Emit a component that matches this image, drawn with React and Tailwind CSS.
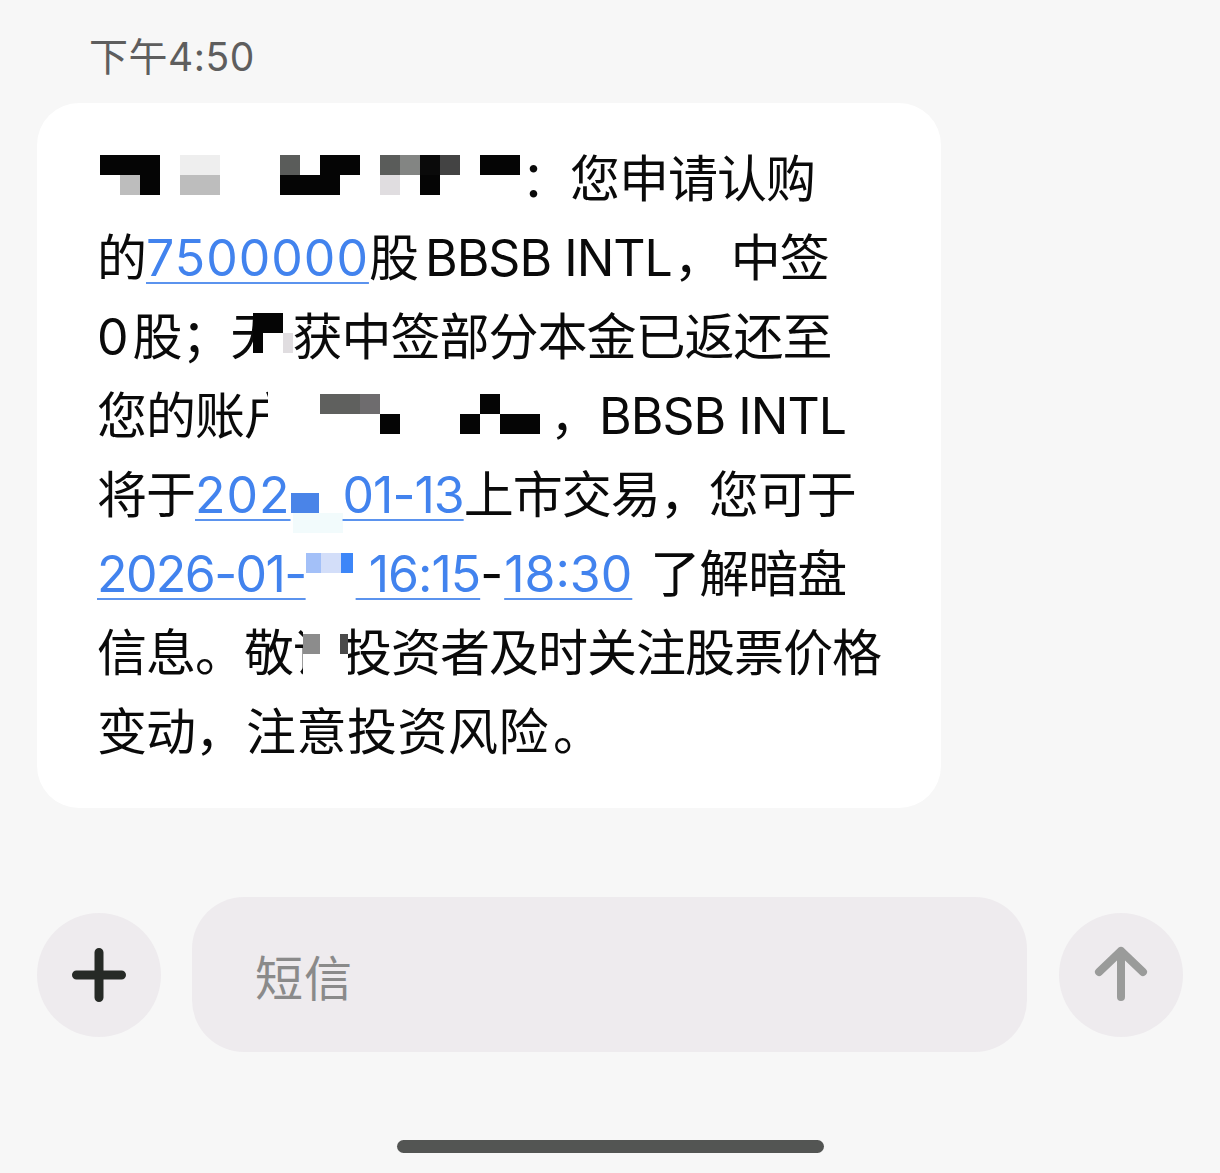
import React from 'react';

const K = '#050505';

// pixelated redaction block, rows of [width, colour] cells, 20px tall each
function Mosaic({ rows, className = '' }) {
  return (
    <span className={`flex flex-col shrink-0 ${className}`}>
      {rows.map((row, i) => (
        <span key={i} className="flex h-[20px]">
          {row.map(([w, c], j) => (
            <span key={j} style={{ width: w, background: c || 'transparent' }} />
          ))}
        </span>
      ))}
    </span>
  );
}

function Link({ children, className = '' }) {
  return (
    <span className={`text-[#4283ee] underline decoration-[2px] underline-offset-[6px] decoration-[#5b93ee] ${className}`}>
      {children}
    </span>
  );
}

function Line({ children }) {
  return <div className="flex h-[79px] leading-[79px] whitespace-pre">{children}</div>;
}

export default function App() {
  return (
    <div className="w-[1220px] h-[1173px] bg-[#f7f7f7] flex flex-col font-[Inter,'Noto_Sans_CJK_SC',sans-serif] overflow-hidden">
      {/* timestamp */}
      <div className="h-[103px] pl-[89px] pt-[35px] text-[39px] leading-[44px] tracking-[0.5px] text-[#5e5e5e]">
        下午4:50
      </div>

      {/* message bubble */}
      <div className="ml-[37px] w-[904px] bg-white rounded-[42px] pl-[60px] pt-[37px] pb-[36px] text-[50px] tracking-[-1px] text-[#0a0a0a]">
        <Line>
          <Mosaic
            className="ml-[3px] mt-[15px]"
            rows={[
              [[60, K], [20], [40, '#eeeeee'], [60], [20, '#5a5c5a'], [20], [40, K], [20], [20, '#5a5c5a'], [20, '#838583'], [20, '#0a0a0a'], [20, '#434343'], [20], [40, K]],
              [[20], [20, '#bdbdbd'], [20, K], [20], [40, '#bdbdbd'], [60], [60, K], [40], [20, '#e0dde0'], [20], [20, K], [80]],
            ]}
          />
          <span className="pl-[1px]">{'：您申请认购'}</span>
        </Line>
        <Line>
          <span>{'的'}</span>
          <Link className="tracking-[1px]">{'7500000'}</Link>
          <span>{'股'}</span>
          <span className="pl-[7px]">{'BBSB INTL'}</span>
          <span className="pl-[2px]">{'，'}</span>
          <span className="pl-[8px]">{'中签'}</span>
        </Line>
        <Line>
          <span className="pr-[5px]">{'0'}</span>
          <span>{'股；'}</span>
          <span className="inline-block w-[22px] overflow-hidden">{'无'}</span>
          <Mosaic
            className="mt-[15px]"
            rows={[
              [[30, K], [10]],
              [[10, K], [20], [10, '#e0dde0']],
            ]}
          />
          <span>{'获中签部分本金已返还至'}</span>
        </Line>
        <Line>
          <span>{'您的账'}</span>
          <span className="inline-block w-[24px] overflow-hidden">{'户'}</span>
          <Mosaic
            className="mt-[17px]"
            rows={[
              [[52], [40, '#5f605e'], [20, '#6e6c6e'], [100], [20, K], [50]],
              [[112], [20, K], [60], [20, K], [20], [40, K], [10]],
            ]}
          />
          <span>{'，BBSB INTL'}</span>
        </Line>
        <Line>
          <span>{'将于'}</span>
          <Link className="tracking-[1px]">{'202'}</Link>
          <Mosaic
            className="mt-[37px]"
            rows={[
              [[28, '#4a84e8'], [24]],
              [[2], [50, '#f2fbfc']],
            ]}
          />
          <Link>{'01-13'}</Link>
          <span>{'上市交易，您可于'}</span>
        </Line>
        <Line>
          <Link className="tracking-[-1.6px]">{'2026-01-'}</Link>
          <Mosaic
            className="mt-[18px]"
            rows={[[[15, '#a3c0f8'], [20, '#d3def9'], [12, '#3d86f8'], [3]]]}
          />
          <Link>{' 16:15'}</Link>
          <span className="pr-[2px]">{'-'}</span>
          <Link className="tracking-[0px]">{'18:30'}</Link>
          <span className="pl-[5px]">{' 了解暗盘'}</span>
        </Line>
        <Line>
          <span>{'信息。敬'}</span>
          <span className="inline-block w-[10px] overflow-hidden">{'请'}</span>
          <Mosaic
            className="mt-[20px]"
            rows={[[[17, '#8c8c8c'], [20], [8, '#4a4a4a']]]}
          />
          <span className="inline-block w-[43px] overflow-hidden">
            <span className="inline-block -ml-[6px]">{'投'}</span>
          </span>
          <span>{'资者及时关注股票价格'}</span>
        </Line>
        <Line>
          <span>{'变动，'}</span>
          <span className="pl-[2px] tracking-[0.5px]">{'注意投资风险'}</span>
          <span className="pl-[4px]">{'。'}</span>
        </Line>
      </div>

      {/* composer */}
      <div className="mt-[89px] ml-[37px] flex items-center">
        <button className="w-[124px] h-[124px] rounded-full bg-[#eeebee] flex items-center justify-center shrink-0">
          <svg width="60" height="60" viewBox="0 0 60 60" fill="none" stroke="#262a26" strokeWidth="9" strokeLinecap="round">
            <path d="M7.5 30H52.5M30 7.5V52.5" />
          </svg>
        </button>
        <div className="ml-[31px] w-[835px] h-[155px] rounded-[52px] bg-[#eeebee] flex items-center pl-[63px] text-[48px] text-[#8a8a8a] tracking-[1px] font-['Noto_Sans_CJK_SC',sans-serif]">
          短信
        </div>
        <button className="ml-[32px] w-[124px] h-[124px] rounded-full bg-[#eeebee] flex items-center justify-center shrink-0">
          <svg width="60" height="60" viewBox="0 0 60 60" fill="none" stroke="#9a9b9a" strokeWidth="8" strokeLinecap="round" strokeLinejoin="round">
            <path d="M30 6V52M8 27L30 6L52 27" />
          </svg>
        </button>
      </div>

      {/* home indicator */}
      <div className="mt-[88px] mx-auto w-[427px] h-[13px] rounded-full bg-[#535553]" />
    </div>
  );
}
